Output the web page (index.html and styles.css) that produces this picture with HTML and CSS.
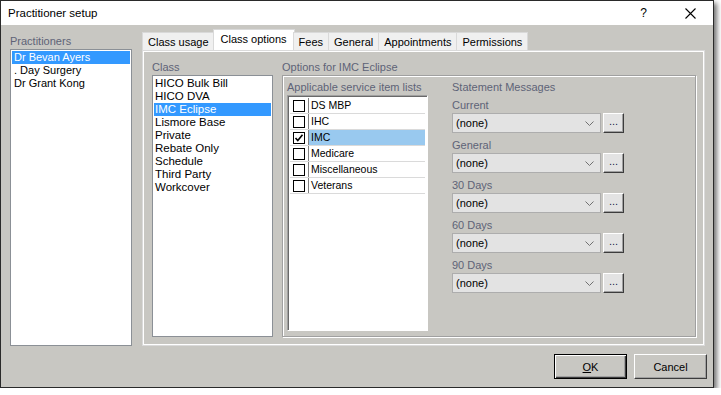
FILE: index.html
```html
<!DOCTYPE html>
<html lang="en">
<head>
  <meta charset="UTF-8">
  <title>Practitioner setup</title>
  <link rel="stylesheet" href="styles.css">
</head>
<body>
  <div class="window">
    <div class="titlebar">
      <span class="title">Practitioner setup</span>
      <span class="help">?</span>
      <svg class="close" width="11" height="11" viewBox="0 0 11 11"><path d="M0.5 0.5 L10.5 10.5 M10.5 0.5 L0.5 10.5" stroke="#000" stroke-width="1.1" fill="none"/></svg>
    </div>

    <div class="main">
      <div class="side">
        <div class="label">Practitioners</div>
        <div class="listbox practitioners">
          <div class="item selected">Dr Bevan Ayers</div>
          <div class="item">. Day Surgery</div>
          <div class="item">Dr Grant Kong</div>
        </div>
      </div>

      <div class="tabs">
        <div class="tabstrip">
          <div class="tab">Class usage</div>
          <div class="tab active">Class options</div>
          <div class="tab">Fees</div>
          <div class="tab">General</div>
          <div class="tab">Appointments</div>
          <div class="tab">Permissions</div>
        </div>
        <div class="panel">
          <div class="page">
            <div class="class-col">
              <div class="label">Class</div>
              <div class="listbox classes">
                <div class="item">HICO Bulk Bill</div>
                <div class="item">HICO DVA</div>
                <div class="item selected">IMC Eclipse</div>
                <div class="item">Lismore Base</div>
                <div class="item">Private</div>
                <div class="item">Rebate Only</div>
                <div class="item">Schedule</div>
                <div class="item">Third Party</div>
                <div class="item">Workcover</div>
              </div>
            </div>

            <div class="options-col">
              <div class="label">Options for IMC Eclipse</div>
              <div class="groupbox">
                <div class="services">
                  <div class="label">Applicable service item lists</div>
                  <div class="checklist">
                    <div class="row"><span class="cell-check"><span class="check"></span></span><span class="cell-text">DS MBP</span></div>
                    <div class="row"><span class="cell-check"><span class="check"></span></span><span class="cell-text">IHC</span></div>
                    <div class="row"><span class="cell-check"><span class="check"><svg width="10" height="10" viewBox="0 0 10 10"><path d="M1.5 5 L3.8 7.6 L8.5 1.8" stroke="#000" stroke-width="1.6" fill="none"/></svg></span></span><span class="cell-text hl">IMC</span></div>
                    <div class="row"><span class="cell-check"><span class="check"></span></span><span class="cell-text">Medicare</span></div>
                    <div class="row"><span class="cell-check"><span class="check"></span></span><span class="cell-text">Miscellaneous</span></div>
                    <div class="row"><span class="cell-check"><span class="check"></span></span><span class="cell-text">Veterans</span></div>
                  </div>
                </div>

                <div class="messages">
                  <div class="label">Statement Messages</div>
                  <div class="msg">
                    <div class="label">Current</div>
                    <div class="combo-row"><div class="combo"><span>(none)</span><svg width="9" height="5" viewBox="0 0 9 5"><path d="M0.5 0.5 L4.5 4.5 L8.5 0.5" stroke="#707070" fill="none"/></svg></div><button class="dots">...</button></div>
                  </div>
                  <div class="msg">
                    <div class="label">General</div>
                    <div class="combo-row"><div class="combo"><span>(none)</span><svg width="9" height="5" viewBox="0 0 9 5"><path d="M0.5 0.5 L4.5 4.5 L8.5 0.5" stroke="#707070" fill="none"/></svg></div><button class="dots">...</button></div>
                  </div>
                  <div class="msg">
                    <div class="label">30 Days</div>
                    <div class="combo-row"><div class="combo"><span>(none)</span><svg width="9" height="5" viewBox="0 0 9 5"><path d="M0.5 0.5 L4.5 4.5 L8.5 0.5" stroke="#707070" fill="none"/></svg></div><button class="dots">...</button></div>
                  </div>
                  <div class="msg">
                    <div class="label">60 Days</div>
                    <div class="combo-row"><div class="combo"><span>(none)</span><svg width="9" height="5" viewBox="0 0 9 5"><path d="M0.5 0.5 L4.5 4.5 L8.5 0.5" stroke="#707070" fill="none"/></svg></div><button class="dots">...</button></div>
                  </div>
                  <div class="msg">
                    <div class="label">90 Days</div>
                    <div class="combo-row"><div class="combo"><span>(none)</span><svg width="9" height="5" viewBox="0 0 9 5"><path d="M0.5 0.5 L4.5 4.5 L8.5 0.5" stroke="#707070" fill="none"/></svg></div><button class="dots">...</button></div>
                  </div>
                </div>
              </div>
            </div>
          </div>
        </div>
      </div>
    </div>

    <div class="footer">
      <button class="btn default"><u>O</u>K</button>
      <button class="btn">Cancel</button>
    </div>
  </div>
</body>
</html>
```

FILE: styles.css
```css
body {
  margin: 0;
  background: #fff;
  font-family: "Liberation Sans", Arial, sans-serif;
  font-size: 11px;
  color: #000;
}
.window {
  width: 714px;
  height: 388px;
  box-sizing: border-box;
  border: 1px solid #2a2a2a;
  background: #c8c7c2;
  box-shadow: 3px 3px 5px rgba(0, 0, 0, 0.55);
  display: flex;
  flex-direction: column;
}
.titlebar {
  height: 24px;
  background: #fff;
  display: flex;
  align-items: center;
  padding: 0 0 0 7px;
}
.title {
  font-size: 11.5px;
  flex: 1;
}
.help {
  font-size: 12px;
  margin-right: 38px;
}
.close {
  margin-right: 17px;
}
.label {
  color: #5e6377;
  line-height: 16px;
  height: 16px;
  white-space: nowrap;
}
.main {
  display: flex;
  padding: 5px 0 0 9px;
  gap: 10px;
}
.side {
  padding-top: 3px;
}
.listbox {
  background: #fff;
  border: 1px solid #8b9096;
  padding: 1px;
  box-sizing: border-box;
}
.practitioners {
  width: 122px;
  height: 297px;
}
.item {
  height: 13px;
  line-height: 13px;
  padding-left: 2px;
  white-space: nowrap;
}
.item.selected {
  background: #3399ff;
  color: #fff;
}
.tabs {
  width: 564px;
  display: flex;
  flex-direction: column;
}
.tabstrip {
  display: flex;
  align-items: flex-end;
  height: 20px;
  padding-left: 1px;
  position: relative;
  z-index: 1;
}
.tab {
  height: 18px;
  line-height: 18px;
  padding: 0 5px;
  border: 1px solid #d9d9d9;
  border-bottom: none;
  background: #f0f0f0;
  margin-left: -1px;
  box-sizing: border-box;
}
.tab.active {
  height: 21px;
  line-height: 19px;
  background: #fff;
  margin: 0 -1px 0 -2px;
  padding: 0 7px;
}
.panel {
  border: 2px solid #fff;
  outline: 1px solid #dadada;
  outline-offset: -1px;
  height: 296px;
  box-sizing: border-box;
  margin-right: 1px;
}
.page {
  background: #c8c7c2;
  height: 100%;
  display: flex;
  padding: 7px 0 0 8px;
  box-sizing: border-box;
  gap: 9px;
}
.classes {
  width: 121px;
  height: 262px;
}
.classes .item {
  padding-left: 1px;
  font-size: 11.5px;
}
.groupbox {
  width: 414px;
  height: 262px;
  box-sizing: border-box;
  border: 1px solid #a0a0a0;
  box-shadow: inset 1px 1px 0 #fff, 1px 1px 0 #fff;
  display: flex;
  padding: 3px 0 0 4px;
  gap: 24px;
}
.checklist {
  width: 141px;
  height: 236px;
  box-sizing: border-box;
  background: #fff;
  border: 1px solid;
  border-color: #a0a0a0 #fff #fff #a0a0a0;
  box-shadow: inset 1px 1px 0 #696969;
  padding: 2px 2px 0 2px;
}
.row {
  display: flex;
  height: 16px;
  border-bottom: 1px solid #dadada;
  box-sizing: border-box;
}
.cell-check {
  width: 19px;
  border-right: 1px solid #808080;
  display: flex;
  align-items: flex-end;
  justify-content: center;
  padding-bottom: 1px;
  box-sizing: border-box;
}
.check {
  width: 12px;
  height: 12px;
  box-sizing: border-box;
  border: 1px solid #000;
  background: #fff;
  display: flex;
  align-items: center;
  justify-content: center;
}
.cell-text {
  flex: 1;
  line-height: 15px;
  padding-left: 2px;
  font-size: 10.5px;
}
.cell-text.hl {
  background: #99c9ef;
}
.messages {
  width: 172px;
}
.messages > .label {
  margin-bottom: 2px;
}
.msg {
  margin-bottom: 4px;
}
.combo-row {
  display: flex;
  gap: 2px;
}
.combo {
  width: 149px;
  height: 20px;
  box-sizing: border-box;
  border: 1px solid #adadad;
  background: #e3e3e3;
  display: flex;
  align-items: center;
  justify-content: space-between;
  padding: 0 6px 0 3px;
}
.dots {
  width: 21px;
  height: 20px;
  padding: 0 0 5px;
  font: 11px "Liberation Sans", Arial, sans-serif;
  color: #1a1a4a;
  background: #e3e3e3;
  border: 1px solid;
  border-color: #fff #3c3c3c #3c3c3c #fff;
  box-shadow: inset -1px -1px 0 #a0a0a0;
  box-sizing: border-box;
}
.footer {
  display: flex;
  justify-content: flex-end;
  gap: 7px;
  padding: 8px 6px 0 0;
}
.btn {
  width: 73px;
  height: 25px;
  box-sizing: border-box;
  font: 11px "Liberation Sans", Arial, sans-serif;
  color: #000;
  background: #c8c7c2;
  border: 1px solid;
  border-color: #fff #3c3c3c #3c3c3c #fff;
  box-shadow: inset -1px -1px 0 #a0a0a0;
}
.btn.default {
  border: 1px solid #000;
  box-shadow: inset 1px 1px 0 #fff, inset -1px -1px 0 #3c3c3c, inset -2px -2px 0 #a0a0a0;
}
```
